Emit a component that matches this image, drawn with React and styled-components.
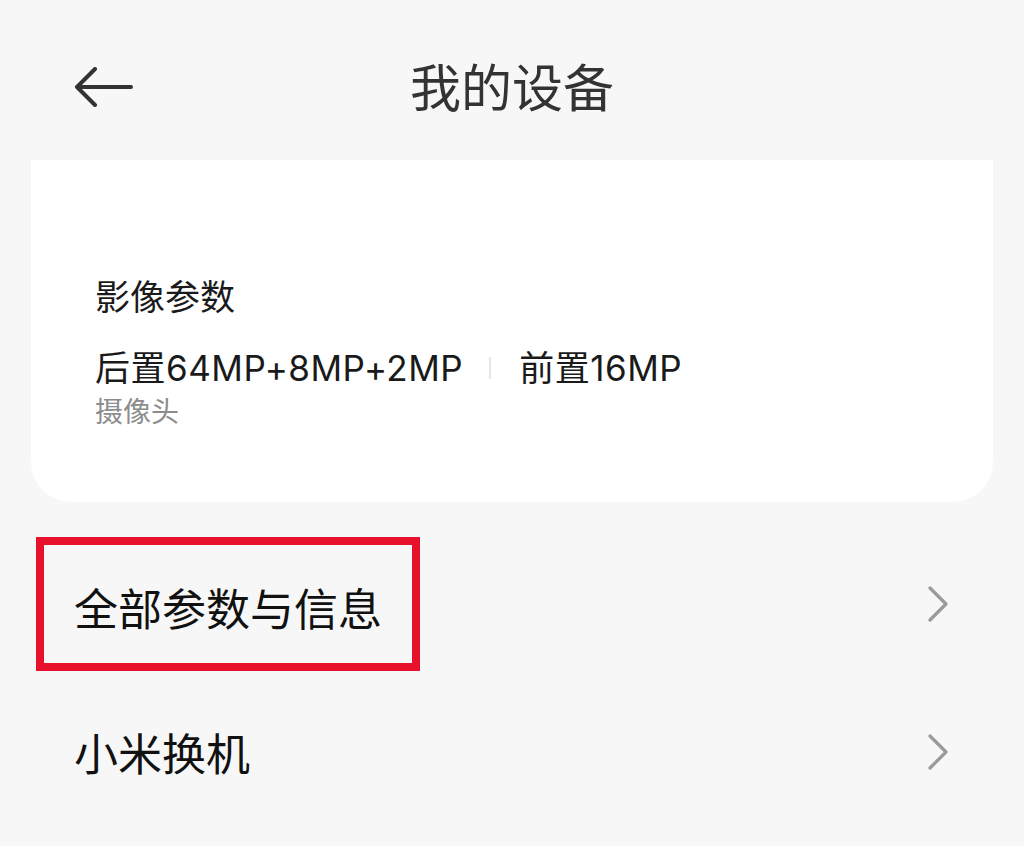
import React from "react";
import styled, { createGlobalStyle } from "styled-components";

const GlobalStyle = createGlobalStyle`
  html, body {
    margin: 0;
    padding: 0;
    background: #f7f7f7;
  }
  body {
    font-family: Inter, "Noto Sans CJK SC", sans-serif;
    color: #1a1a1a;
  }
`;

const Page = styled.div`
  width: 1024px;
  height: 846px;
  overflow: hidden;
  background: #f7f7f7;
`;

const Header = styled.header`
  height: 160px;
  display: grid;
  grid-template-columns: 1fr auto 1fr;
  align-items: start;
  padding-top: 58px;
  box-sizing: border-box;
`;

const BackButton = styled.button`
  justify-self: start;
  margin: 9px 0 0 74px;
  padding: 0;
  border: 0;
  background: none;
  display: flex;
  svg {
    display: block;
  }
`;

const Title = styled.h1`
  margin: 0;
  font-family: "Noto Sans CJK SC", sans-serif;
  font-size: 51px;
  line-height: 54px;
  font-weight: 400;
  color: #333;
`;

const Card = styled.section`
  margin: 0 31px;
  background: #fff;
  border-radius: 0 0 40px 40px;
  padding: 114px 64px 75px;
`;

const CardTitle = styled.div`
  font-family: "Noto Sans CJK SC", sans-serif;
  font-size: 35px;
  line-height: 42px;
`;

const SpecLine = styled.div`
  display: flex;
  align-items: center;
  margin-top: 31px;
  font-size: 35px;
  line-height: 42px;
  letter-spacing: 0.5px;
`;

const Divider = styled.span`
  width: 2px;
  height: 22px;
  background: #e6e6e6;
  margin: 0 28px 0 26px;
`;

const Caption = styled.div`
  margin-top: 4px;
  font-family: "Noto Sans CJK SC", sans-serif;
  font-size: 28px;
  line-height: 34px;
  color: #8c8c8c;
`;

const List = styled.div`
  padding-top: 35px;
`;

const Row = styled.div`
  display: flex;
  align-items: center;
  justify-content: space-between;
  min-height: ${(p) => p.$height}px;
  padding: 0 75px 0 74px;
`;

const Label = styled.span`
  font-family: "Noto Sans CJK SC", sans-serif;
  font-size: 44px;
  line-height: 53px;
  color: #111;
`;

const Highlight = styled.span`
  display: inline-block;
  margin-left: -38px;
  padding: 36px 30px 29px;
  border: 8px solid #e8112b;
`;

const Chevron = () => (
  <svg width="22" height="36" viewBox="0 0 22 36">
    <path
      d="M3 2 L19 18 L3 34"
      fill="none"
      stroke="#9a9a9a"
      strokeWidth="3.2"
      strokeLinecap="round"
      strokeLinejoin="round"
    />
  </svg>
);

const BackArrow = () => (
  <svg width="60" height="40" viewBox="0 0 60 40">
    <path
      d="M21 2 L3 20 L21 38 M3 20 H57"
      fill="none"
      stroke="#333"
      strokeWidth="4"
      strokeLinecap="round"
      strokeLinejoin="round"
    />
  </svg>
);

export default function App() {
  return (
    <Page>
      <GlobalStyle />
      <Header>
        <BackButton aria-label="返回">
          <BackArrow />
        </BackButton>
        <Title>我的设备</Title>
        <span />
      </Header>

      <Card>
        <CardTitle>影像参数</CardTitle>
        <SpecLine>
          <span>后置64MP+8MP+2MP</span>
          <Divider />
          <span>前置16MP</span>
        </SpecLine>
        <Caption>摄像头</Caption>
      </Card>

      <List>
        <Row $height={134}>
          <Highlight>
            <Label>全部参数与信息</Label>
          </Highlight>
          <Chevron />
        </Row>
        <Row $height={162}>
          <Label>小米换机</Label>
          <Chevron />
        </Row>
      </List>
    </Page>
  );
}
